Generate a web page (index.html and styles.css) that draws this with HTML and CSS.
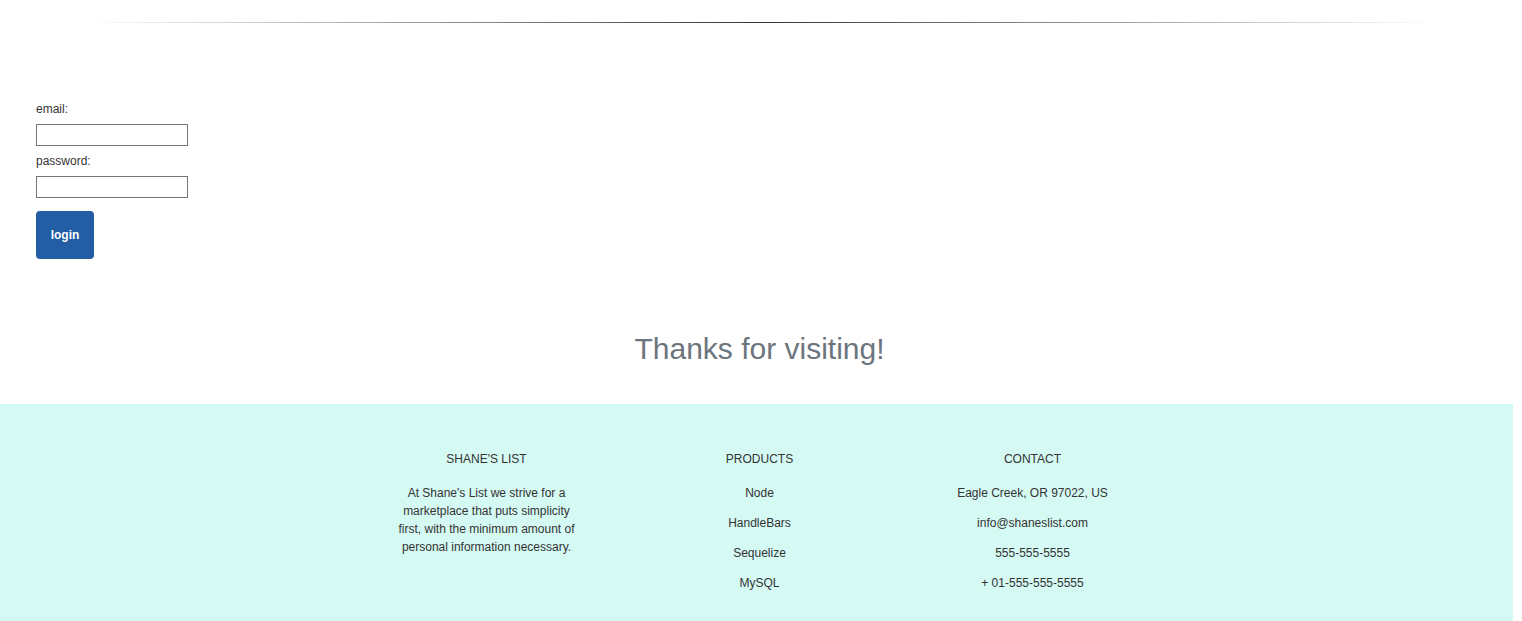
FILE: index.html
```html
<!DOCTYPE html>
<html lang="en">
<head>
<meta charset="utf-8">
<title>Shane's List - Login</title>
<link rel="stylesheet" href="styles.css">
</head>
<body>
<div class="divider"></div>
<form class="login-form">
  <label class="field-label" for="email">email:</label>
  <input class="field-input" type="text" id="email">
  <label class="field-label" for="password">password:</label>
  <input class="field-input" type="password" id="password">
  <button class="login-btn" type="button">login</button>
</form>
<h2 class="thanks">Thanks for visiting!</h2>
<footer class="site-footer">
  <div class="footer-grid">
    <div class="footer-col">
      <h6 class="footer-title">SHANE'S LIST</h6>
      <p class="footer-text">At Shane's List we strive for a marketplace that puts simplicity first, with the minimum amount of personal information necessary.</p>
    </div>
    <div class="footer-col">
      <h6 class="footer-title">PRODUCTS</h6>
      <ul class="footer-list">
        <li>Node</li>
        <li>HandleBars</li>
        <li>Sequelize</li>
        <li>MySQL</li>
      </ul>
    </div>
    <div class="footer-col">
      <h6 class="footer-title">CONTACT</h6>
      <ul class="footer-list">
        <li>Eagle Creek, OR 97022, US</li>
        <li>info@shaneslist.com</li>
        <li>555-555-5555</li>
        <li>+ 01-555-555-5555</li>
      </ul>
    </div>
  </div>
</footer>
</body>
</html>
```
FILE: styles.css
```css
html, body {
  margin: 0;
  padding: 0;
  overflow: hidden;
}
body {
  font-family: "Liberation Sans", Arial, sans-serif;
  font-size: 12px;
  color: #333;
  background: #fff;
}
.divider {
  height: 1px;
  width: 89%;
  margin: 22px auto 0;
  background: linear-gradient(to right, rgba(0,0,0,0), rgba(0,0,0,0.8), rgba(0,0,0,0));
}
.login-form {
  display: flex;
  flex-direction: column;
  align-items: flex-start;
  padding-left: 36px;
  margin: 79px 0 0;
}
.field-label {
  display: block;
  line-height: 14px;
  margin-bottom: 8px;
  color: #333;
}
.field-input {
  box-sizing: border-box;
  width: 152px;
  height: 22px;
  margin: 0 0 8px;
  padding: 1px 2px;
  border: 1px solid #767676;
  border-radius: 0;
  font-family: "Liberation Sans", Arial, sans-serif;
  font-size: 13px;
  background: #fff;
}
.login-btn {
  margin-top: 5px;
  width: 58px;
  height: 48px;
  border: none;
  border-radius: 4px;
  background: #235da4;
  color: #fff;
  font-family: "Liberation Sans", Arial, sans-serif;
  font-size: 12px;
  font-weight: bold;
  padding: 0;
}
.thanks {
  margin: 72px 0 37px;
  text-align: center;
  font-size: 30px;
  font-weight: normal;
  line-height: 36px;
  color: #6c757d;
  padding-right: 3px;
}
.site-footer {
  box-sizing: border-box;
  width: 1513px;
  background: #d5f9f3;
  padding: 48px 0 29px 6px;
}
.footer-grid {
  display: grid;
  grid-template-columns: repeat(3, 273px);
  justify-content: center;
}
.footer-col {
  text-align: center;
  padding: 0 41px;
}
.footer-title {
  margin: 0 0 18px;
  font-size: 12px;
  font-weight: normal;
  line-height: 14px;
  color: #333;
}
.footer-text {
  margin: 0;
  line-height: 18px;
}
.footer-list {
  list-style: none;
  margin: 0;
  padding: 0;
  display: flex;
  flex-direction: column;
  gap: 12px;
}
.footer-list li {
  line-height: 18px;
  white-space: nowrap;
}
```
